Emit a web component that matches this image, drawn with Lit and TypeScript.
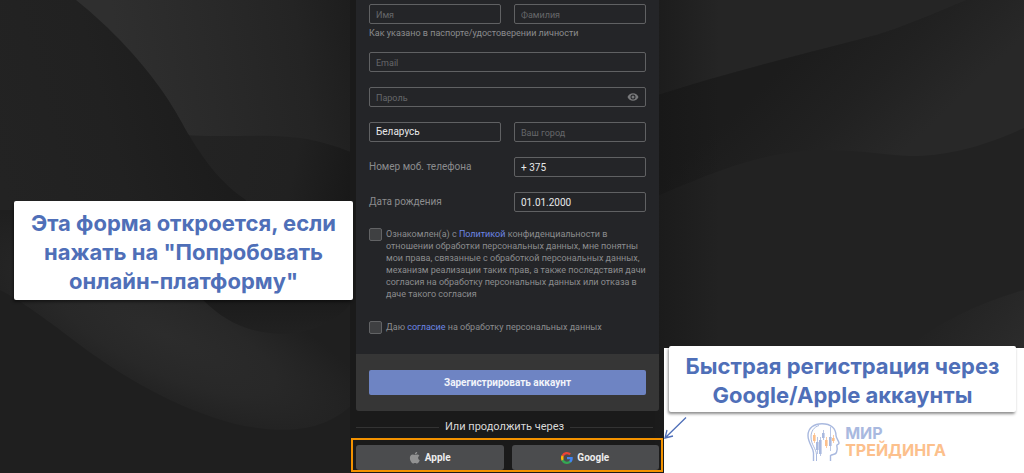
import { LitElement, html, css, svg } from "lit";
import { customElement, state } from "lit/decorators.js";

@customElement("wave-backdrop")
export class WaveBackdrop extends LitElement {
  static styles = css`
    :host {
      display: block;
    }
    svg {
      display: block;
      width: 100%;
      height: 100%;
    }
  `;

  render() {
    return html`
      <svg viewBox="0 0 1024 473" preserveAspectRatio="none" aria-hidden="true">
        <defs>
          <linearGradient id="upper" gradientUnits="userSpaceOnUse" x1="120" y1="60" x2="356" y2="20">
            <stop offset="0" stop-color="#2f2f2f" />
            <stop offset=".35" stop-color="#2a2a2a" />
            <stop offset=".75" stop-color="#242424" />
            <stop offset="1" stop-color="#1d1d1d" />
          </linearGradient>
          <linearGradient id="fold" gradientUnits="userSpaceOnUse" x1="200" y1="150" x2="356" y2="180">
            <stop offset="0" stop-color="#232323" />
            <stop offset=".6" stop-color="#212121" />
            <stop offset="1" stop-color="#181818" />
          </linearGradient>
          <linearGradient id="left" gradientUnits="userSpaceOnUse" x1="0" y1="180" x2="230" y2="120">
            <stop offset="0" stop-color="#232323" />
            <stop offset=".5" stop-color="#212121" />
            <stop offset="1" stop-color="#1b1b1b" />
          </linearGradient>
          <radialGradient id="glow" gradientUnits="userSpaceOnUse" cx="0" cy="0" r="1"
            gradientTransform="translate(165 335) rotate(25) scale(240 75)">
            <stop offset="0" stop-color="#2c2c2c" />
            <stop offset=".5" stop-color="#282828" />
            <stop offset="1" stop-color="#1f1f1f" />
          </radialGradient>
          <linearGradient id="band" gradientUnits="userSpaceOnUse" x1="800" y1="50" x2="900" y2="155">
            <stop offset="0" stop-color="#1c1c1c" />
            <stop offset=".5" stop-color="#212121" />
            <stop offset="1" stop-color="#282828" />
          </linearGradient>
          <linearGradient id="corner" gradientUnits="userSpaceOnUse" x1="940" y1="310" x2="1010" y2="370">
            <stop offset="0" stop-color="#222" />
            <stop offset="1" stop-color="#2c2c2c" />
          </linearGradient>
          <linearGradient id="edge" gradientUnits="userSpaceOnUse" x1="659" y1="0" x2="720" y2="0">
            <stop offset="0" stop-color="#141414" stop-opacity=".5" />
            <stop offset="1" stop-color="#141414" stop-opacity="0" />
          </linearGradient>
          <linearGradient id="shade" gradientUnits="userSpaceOnUse" x1="0" y1="290" x2="0" y2="334">
            <stop offset="0" stop-color="#1a1a1a" />
            <stop offset="1" stop-color="#212121" />
          </linearGradient>
        </defs>
        <rect width="1024" height="473" fill="#1f1f1f" />
        <rect x="70" width="290" height="210" fill="url(#upper)" />
        <path fill="url(#fold)" d="M185 135C225 138 265 133 300 138C322 141 342 148 360 156V260H185Z" />
        <path fill="url(#left)" d="M0 0H76C110 27 145 64 167 98C180 118 184 127 189 135C205 162 222 184 246 200V260H0Z" />
        <rect y="210" width="360" height="263" fill="#1f1f1f" />
        <path fill="url(#glow)" d="M0 210H360V396C330 433 285 435 235 424C175 408 120 375 80 345C50 322 20 300 0 290Z" />
        <path fill="url(#shade)" d="M203 300C225 322 250 334 285 334C320 331 340 318 354 300V290H203Z" />
        <rect x="350" width="320" height="473" fill="#1a1a1a" />
        <rect x="655" width="369" height="473" fill="#222" />
        <path fill="#252525" d="M655 0H967C935 13 895 31 865 38C800 55 730 72 655 96Z" />
        <path fill="url(#band)" d="M655 96C730 72 800 55 865 38C895 31 935 13 967 0H1024V128C980 148 945 156 910 156C880 155 850 148 810 151C755 153 700 178 655 197Z" />
        <path fill="url(#corner)" d="M905 348C940 322 980 302 1024 290V360H905Z" />
        <rect x="655" width="70" height="473" fill="url(#edge)" />
      </svg>
    `;
  }
}

const candles = [
  { x: 814, top: 433, height: 10, bodyTop: 435, bodyHeight: 6, tone: "#fcc08c" },
  { x: 817, top: 437, height: 17, bodyTop: 442, bodyHeight: 8, tone: "#a9b9df" },
  { x: 820, top: 437, height: 19, bodyTop: 440, bodyHeight: 14, tone: "#a9b9df" },
  { x: 823, top: 430, height: 10, bodyTop: 433, bodyHeight: 5, tone: "#a9b9df" },
  { x: 826, top: 437, height: 11, bodyTop: 440, bodyHeight: 6, tone: "#fcc08c" },
  { x: 830, top: 427, height: 24, bodyTop: 437, bodyHeight: 9, tone: "#a9b9df" },
  { x: 833, top: 435, height: 8, bodyTop: 438, bodyHeight: 3, tone: "#fcc08c" },
];

@customElement("brand-mark")
export class BrandMark extends LitElement {
  static styles = css`
    :host {
      display: flex;
      align-items: center;
      gap: 4px;
      font: 700 16px/17px Inter, "Noto Sans", sans-serif;
    }
    svg {
      width: 35px;
      height: 40px;
    }
    .name {
      display: flex;
      flex-direction: column;
      color: #a9b9df;
    }
    .accent {
      color: #fcc08c;
    }
  `;

  render() {
    return html`
      <svg viewBox="806 422 35 40" aria-hidden="true">
        <path fill="none" stroke="#a9b9df" stroke-width="1.4"
          d="M813.5 461V453C813.5 448 808 443 808 435.5C808 428 814 423.7 822 423.7C831 423.7 836 428.5 836 435.5C836 438 839 441 839 443.2C839 444.4 836.8 444.4 836.8 445.5C837.5 448 837.3 450 836.6 452C836 455 832.5 454 830.5 455.5V461" />
        <path fill="none" stroke="#a9b9df" stroke-width="1"
          d="M816.5 461V455C816.5 449 811 445 811 437C811 431 814 427 819 425.5" />
        ${candles.map(
          (c) => svg`
            <rect x=${c.x} y=${c.top} width=".8" height=${c.height} fill=${c.tone} />
            <rect x=${c.x - 1} y=${c.bodyTop} width="2.6" height=${c.bodyHeight} fill=${c.tone} />`
        )}
      </svg>
      <span class="name"><span>МИР</span><span class="accent">ТРЕЙДИНГА</span></span>
    `;
  }
}

@customElement("app-root")
export class AppRoot extends LitElement {
  @state() private passwordVisible = false;

  static styles = css`
    :host {
      display: block;
      font-family: Roboto, "Noto Sans", sans-serif;
      color: #8b8c8e;
    }
    * {
      box-sizing: border-box;
    }
    .stage {
      position: relative;
      min-height: 100vh;
      overflow: hidden;
      background: #1f1f1f;
      padding-right: 9px;
      isolation: isolate;
    }
    .backdrop {
      position: absolute;
      inset: 0;
      z-index: -1;
    }
    .column {
      width: 100%;
      max-width: 303px;
      margin: 0 auto;
    }
    .card {
      background: #242528;
      border-radius: 0 0 3px 3px;
      overflow: hidden;
    }
    .fields {
      display: flex;
      flex-direction: column;
      gap: 15px;
      padding: 4px 13px 20px;
    }
    .row {
      display: grid;
      grid-template-columns: 1fr 1fr;
      gap: 13px;
      align-items: center;
    }
    .hint {
      margin: 5px 0 0;
      font-size: 9px;
      line-height: 8px;
    }
    .label {
      font-size: 10px;
      line-height: 20px;
    }
    .input {
      display: block;
      width: 100%;
      height: 20px;
      margin: 0;
      padding: 0 6px;
      border: 1px solid #606163;
      border-radius: 2px;
      background: transparent;
      color: #e8e8e8;
      font-family: inherit;
      font-size: 10px;
      line-height: 18px;
      appearance: none;
      outline: none;
    }
    .input::placeholder {
      color: #66676a;
      font-size: 9px;
      opacity: 1;
    }
    .secret {
      position: relative;
    }
    .reveal {
      position: absolute;
      top: 0;
      right: 7px;
      display: flex;
      align-items: center;
      height: 20px;
      padding: 0;
      border: 0;
      background: none;
    }
    .reveal svg {
      width: 12px;
      height: 12px;
    }
    .consents {
      display: flex;
      flex-direction: column;
      gap: 21px;
      padding-top: 1px;
    }
    .consent {
      display: grid;
      grid-template-columns: 13px 1fr;
      gap: 4px;
      font-size: 9px;
      line-height: 12px;
    }
    .tick {
      width: 13px;
      height: 13px;
      margin: 0;
      border: 1px solid #626365;
      border-radius: 2px;
      background: #3f4042;
      appearance: none;
    }
    .tick:checked {
      background: #6e84c3;
    }
    .link {
      color: #6c86e4;
      text-decoration: none;
    }
    .footer {
      padding: 16px 13px;
      background: #363636;
    }
    .submit {
      display: block;
      width: 100%;
      height: 25px;
      padding: 0;
      border: 0;
      border-radius: 2px;
      background: #6e84c3;
      color: #f2f4fa;
      font: 700 10px/25px Roboto, "Noto Sans", sans-serif;
    }
    .divider {
      display: flex;
      align-items: center;
      gap: 6px;
      padding: 8px 6px 3px 0;
      color: #d8d8d8;
      font-size: 11px;
      line-height: 16px;
    }
    .rule {
      flex: 1;
      height: 1px;
      background: #333;
    }
    .social {
      display: grid;
      grid-template-columns: 1fr 1fr;
      gap: 8px;
      margin: 0 -4px 0 -5px;
      padding: 5px 2px 0 3px;
      border: 2px solid #f39200;
    }
    .provider {
      display: flex;
      align-items: center;
      justify-content: center;
      gap: 4px;
      height: 25px;
      padding: 0;
      border: 0;
      border-radius: 3px;
      background: #4b4c4e;
      color: #ededed;
      font: 700 10px/25px Roboto, "Noto Sans", sans-serif;
    }
    .provider svg {
      width: 12px;
      height: 12px;
    }
    .panel {
      position: absolute;
      right: 0;
      bottom: 0;
      width: 360px;
      height: 125px;
      background: #fff;
    }
    .callout {
      position: absolute;
      margin: 0;
      border-radius: 2px;
      background: #fff;
      color: #4f6fb8;
      text-align: center;
      font: 700 22px/29px Inter, "Noto Sans", sans-serif;
      box-shadow: -1px 2px 3px rgba(0, 0, 0, 0.45);
    }
    .callout-form {
      left: 14px;
      top: 201px;
      width: 339px;
      padding: 8px 0 4px;
    }
    .callout-social {
      right: 8px;
      bottom: 61px;
      width: 347px;
      padding: 6px 0 2px;
    }
    .arrow {
      position: absolute;
      right: 336px;
      bottom: 33px;
      width: 25px;
      height: 24px;
    }
    .brand {
      position: absolute;
      right: 78px;
      bottom: 11px;
    }
  `;

  private togglePassword() {
    this.passwordVisible = !this.passwordVisible;
  }

  render() {
    return html`
      <main class="stage">
        <wave-backdrop class="backdrop"></wave-backdrop>

        <div class="column">
          <form class="card" @submit=${(e: Event) => e.preventDefault()}>
            <div class="fields">
              <div>
                <div class="row">
                  <input class="input" aria-label="Имя" placeholder="Имя" />
                  <input class="input" aria-label="Фамилия" placeholder="Фамилия" />
                </div>
                <p class="hint">Как указано в паспорте/удостоверении личности</p>
              </div>
              <input class="input" type="email" aria-label="Email" placeholder="Email" />
              <div class="secret">
                <input class="input" type=${this.passwordVisible ? "text" : "password"} aria-label="Пароль" placeholder="Пароль" />
                <button class="reveal" type="button" aria-label="Показать пароль" @click=${this.togglePassword}>
                  <svg viewBox="0 0 24 24" fill="#77787a">
                    <path d="M12 4.5C7 4.5 2.73 7.61 1 12c1.73 4.39 6 7.5 11 7.5s9.27-3.11 11-7.5c-1.73-4.39-6-7.5-11-7.5zM12 17a5 5 0 1 1 0-10 5 5 0 0 1 0 10zm0-8a3 3 0 1 0 0 6 3 3 0 0 0 0-6z" />
                  </svg>
                </button>
              </div>
              <div class="row">
                <select class="input" aria-label="Страна">
                  <option>Беларусь</option>
                </select>
                <input class="input" aria-label="Ваш город" placeholder="Ваш город" />
              </div>
              <div class="row">
                <label class="label" for="phone">Номер моб. телефона</label>
                <input class="input" id="phone" type="tel" value="+ 375" />
              </div>
              <div class="row">
                <label class="label" for="birth">Дата рождения</label>
                <input class="input" id="birth" value="01.01.2000" />
              </div>
              <div class="consents">
                <div class="consent">
                  <input class="tick" id="policy" type="checkbox" />
                  <label for="policy">
                    Ознакомлен(а) с <a class="link" href="#policy">Политикой</a> конфиденциальности в
                    отношении обработки персональных данных, мне понятны мои права, связанные с обработкой
                    персональных данных, механизм реализации таких прав, а также последствия дачи согласия
                    на обработку персональных данных или отказа в даче такого согласия
                  </label>
                </div>
                <div class="consent">
                  <input class="tick" id="agree" type="checkbox" />
                  <label for="agree">
                    Даю <a class="link" href="#agree">согласие</a> на обработку персональных данных
                  </label>
                </div>
              </div>
            </div>
            <div class="footer">
              <button class="submit" type="submit">Зарегистрировать аккаунт</button>
            </div>
          </form>

          <div class="divider">
            <span class="rule"></span>
            <span>Или продолжить через</span>
            <span class="rule"></span>
          </div>
          <div class="social">
            <button class="provider" type="button">
              <svg viewBox="0 0 24 24" fill="#929292" aria-hidden="true">
                <path d="M17.05 20.28c-.98.95-2.05.8-3.08.35-1.09-.46-2.09-.48-3.24 0-1.44.62-2.2.44-3.06-.35C2.79 15.25 3.51 7.59 9.05 7.31c1.35.07 2.29.74 3.08.8 1.18-.24 2.31-.93 3.57-.84 1.51.12 2.65.72 3.4 1.8-3.12 1.87-2.38 5.98.48 7.13-.57 1.5-1.31 2.99-2.54 4.09zM12.03 7.25c-.15-2.23 1.66-4.07 3.74-4.25.29 2.58-2.34 4.5-3.74 4.25z"
                  transform="translate(-4 -4.5) scale(1.3)" />
              </svg>
              Apple
            </button>
            <button class="provider" type="button">
              <svg viewBox="0 0 24 24" aria-hidden="true">
                <path fill="#4285f4" d="M23.5 12.3c0-.8-.1-1.6-.2-2.3H12v4.5h6.5a5.5 5.5 0 0 1-2.4 3.6v3h3.9c2.2-2.1 3.5-5.1 3.5-8.8z" />
                <path fill="#34a853" d="M12 24c3.2 0 6-1.1 8-2.9l-3.900-3c-1.1.7-2.5 1.2-4.1 1.2-3.1 0-5.8-2.1-6.7-5H1.3v3.1A12 12 0 0 0 12 24z" />
                <path fill="#fbbc05" d="M5.3 14.3a7.2 7.2 0 0 1 0-4.6V6.600h-4a12 12 0 0 0 0 10.8z" />
                <path fill="#ea4335" d="M12 4.7c1.8 0 3.3.6 4.6 1.8L20 3.1A12 12 0 0 0 1.3 6.6l4 3.1c.9-2.9 3.6-5 6.7-5z" />
              </svg>
              Google
            </button>
          </div>
        </div>

        <aside class="panel"></aside>
        <p class="callout callout-form">Эта форма откроется, если<br />нажать на "Попробовать<br />онлайн-платформу"</p>
        <p class="callout callout-social">Быстрая регистрация через<br />Google/Apple аккаунты</p>
        <svg class="arrow" viewBox="0 0 25 24" fill="none" stroke="#4f6fb8" stroke-width="1.3" aria-hidden="true">
          <path d="M23 1.5L2 22M4 14L2 22L10 20" />
        </svg>
        <brand-mark class="brand"></brand-mark>
      </main>
    `;
  }
}
